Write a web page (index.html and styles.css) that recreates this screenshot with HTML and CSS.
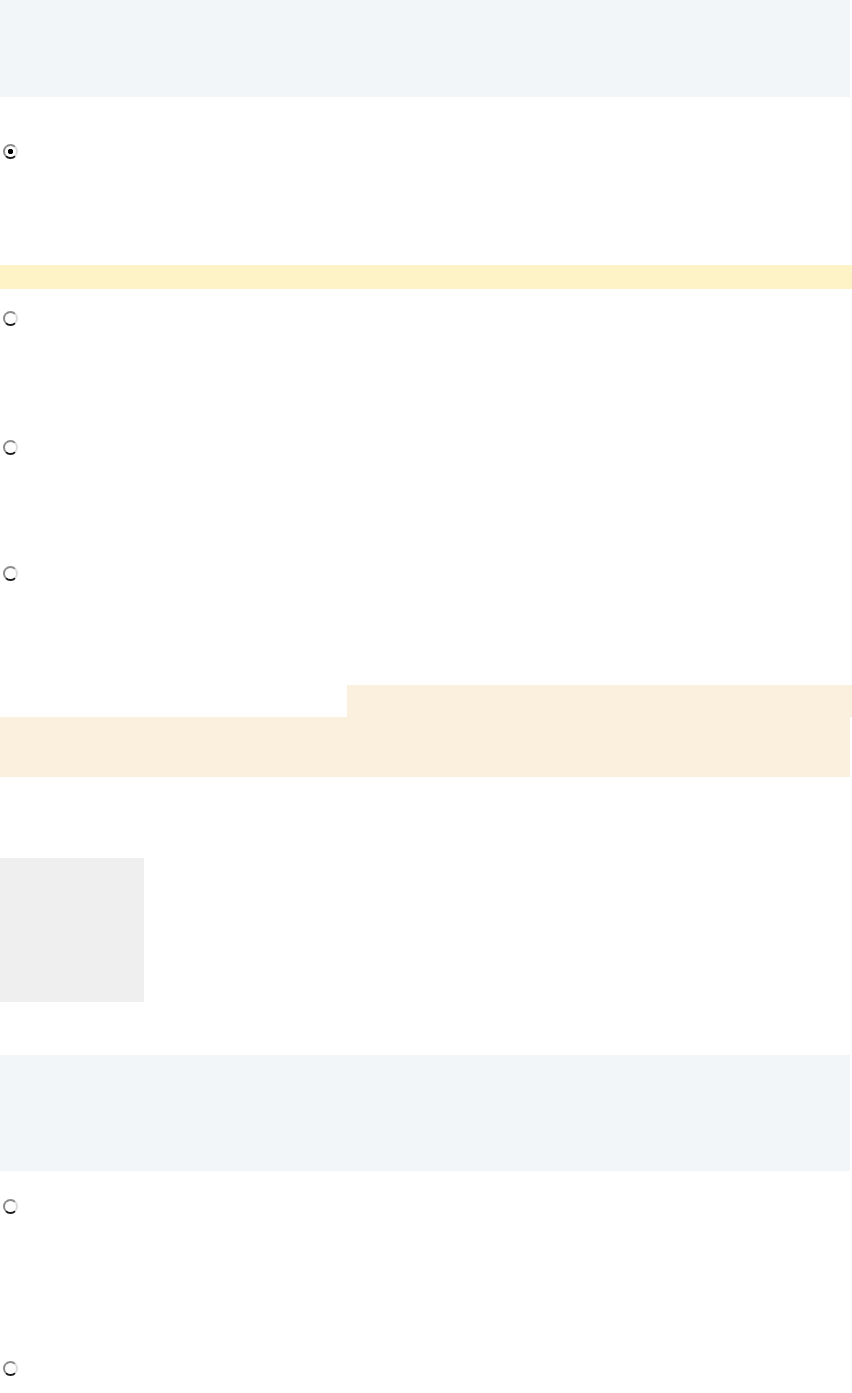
FILE: index.html
```html
<!DOCTYPE html>
<html lang="en">
<head>
<meta charset="utf-8">
<title>Options</title>
<link rel="stylesheet" href="styles.css">
</head>
<body>
  <div class="page">
    <header class="panel panel-top"></header>

    <div class="opt opt-1"><input class="radio" type="radio" name="choice" checked aria-label="Option 1"></div>
    <div class="band"></div>
    <div class="opt opt-2"><input class="radio" type="radio" name="choice" aria-label="Option 2"></div>
    <div class="opt opt-3"><input class="radio" type="radio" name="choice" aria-label="Option 3"></div>
    <div class="opt opt-4"><input class="radio" type="radio" name="choice" aria-label="Option 4"></div>

    <section class="notice">
      <div class="notice-tab"></div>
      <div class="notice-body"></div>
    </section>

    <div class="thumb"></div>

    <div class="panel panel-bottom"></div>

    <div class="opt opt-5"><input class="radio" type="radio" name="choice2" aria-label="Option 5"></div>
    <div class="opt opt-6"><input class="radio" type="radio" name="choice2" aria-label="Option 6"></div>
  </div>
</body>
</html>
```

FILE: styles.css
```css
html, body {
  margin: 0;
  padding: 0;
  background: #ffffff;
  font-family: "Liberation Sans", Arial, sans-serif;
}

.page {
  display: flex;
  flex-direction: column;
  width: 852px;
}

.panel {
  width: 850px;
  background: #f3f6f9;
}

.panel-top {
  height: 97px;
}

.panel-bottom {
  height: 116px;
  margin-top: 53px;
}

.opt {
  box-sizing: border-box;
  display: flex;
  align-items: flex-start;
}

.opt-1 { height: 168px; padding-top: 47px; }
.opt-2 { height: 129px; padding-top: 22px; }
.opt-3 { height: 126px; padding-top: 22px; }
.opt-4 { height: 141px; padding-top: 22px; }
.opt-5 { height: 162px; padding-top: 28px; }
.opt-6 { height: 60px; padding-top: 28px; }

.radio {
  -webkit-appearance: none;
  appearance: none;
  box-sizing: border-box;
  width: 15px;
  height: 15px;
  margin: 0 0 0 3px;
  border-radius: 50%;
  border: 2px solid;
  border-color: #8c8c8c #dcdcdc #1a1a1a #8a8a8a;
  background: #ffffff;
}

.radio:checked {
  background: radial-gradient(circle at center, #000000 0, #000000 2.4px, #ffffff 3px);
}

.band {
  height: 24px;
  width: 852px;
  background: #fef3c7;
}

.notice {
  display: flex;
  flex-direction: column;
}

.notice-tab {
  height: 32px;
  margin-left: 347px;
  width: 505px;
  background: #fbefdd;
}

.notice-body {
  height: 60px;
  width: 850px;
  background: #fbefdd;
}

.thumb {
  width: 144px;
  height: 144px;
  margin-top: 81px;
  background: #efefef;
}
```
